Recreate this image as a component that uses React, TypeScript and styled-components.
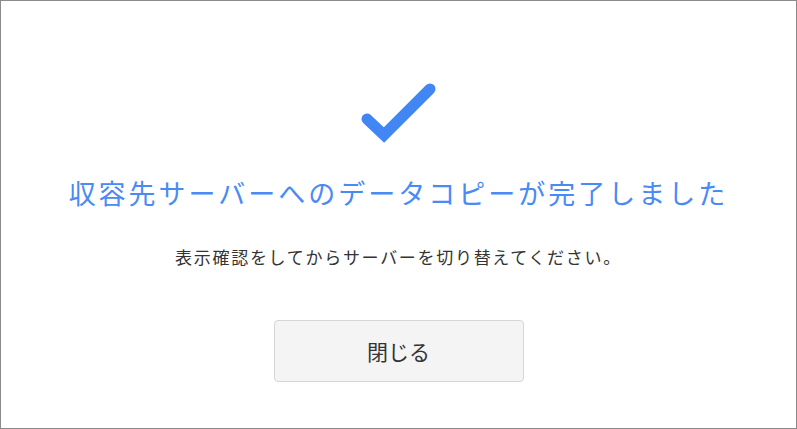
import React from "react";
import styled, { createGlobalStyle } from "styled-components";

const Global = createGlobalStyle`
  html, body { margin: 0; padding: 0; background: #fff; }
  body { font-family: "Noto Sans CJK JP", "Noto Sans", sans-serif; }
  * { box-sizing: border-box; }
`;

const Frame = styled.div`
  width: 797px;
  height: 429px;
  border: 1px solid #8a8a8a;
  background: #fff;
  display: flex;
  flex-direction: column;
  align-items: center;
  padding-top: 75px;
`;

const Check = styled.svg`
  width: 80px;
  height: 68px;
  display: block;
  overflow: visible;
`;

const Title = styled.h1`
  margin: 29px 0 0;
  font-size: 27px;
  font-weight: 400;
  letter-spacing: 3px;
  line-height: 40px;
  color: #4a8af4;
  text-align: center;
`;

const Message = styled.p`
  margin: 32px 0 0;
  font-size: 17px;
  font-weight: 400;
  letter-spacing: 1.7px;
  line-height: 24px;
  color: #333;
  text-align: center;
`;

const CloseButton = styled.button`
  margin-top: 51px;
  width: 250px;
  height: 62px;
  background: #f4f4f4;
  border: 1px solid #d6d6d6;
  border-radius: 4px;
  font-family: inherit;
  font-size: 21px;
  color: #333;
  cursor: pointer;
`;

export default function App() {
  return (
    <>
      <Global />
      <Frame>
        <Check viewBox="0 0 80 68">
          <polyline
            points="8,43 25,59 71,13"
            fill="none"
            stroke="#4285f4"
            strokeWidth="11"
            strokeLinecap="round"
            strokeLinejoin="miter"
          />
        </Check>
        <Title>収容先サーバーへのデータコピーが完了しました</Title>
        <Message>表示確認をしてからサーバーを切り替えてください。</Message>
        <CloseButton>閉じる</CloseButton>
      </Frame>
    </>
  );
}
